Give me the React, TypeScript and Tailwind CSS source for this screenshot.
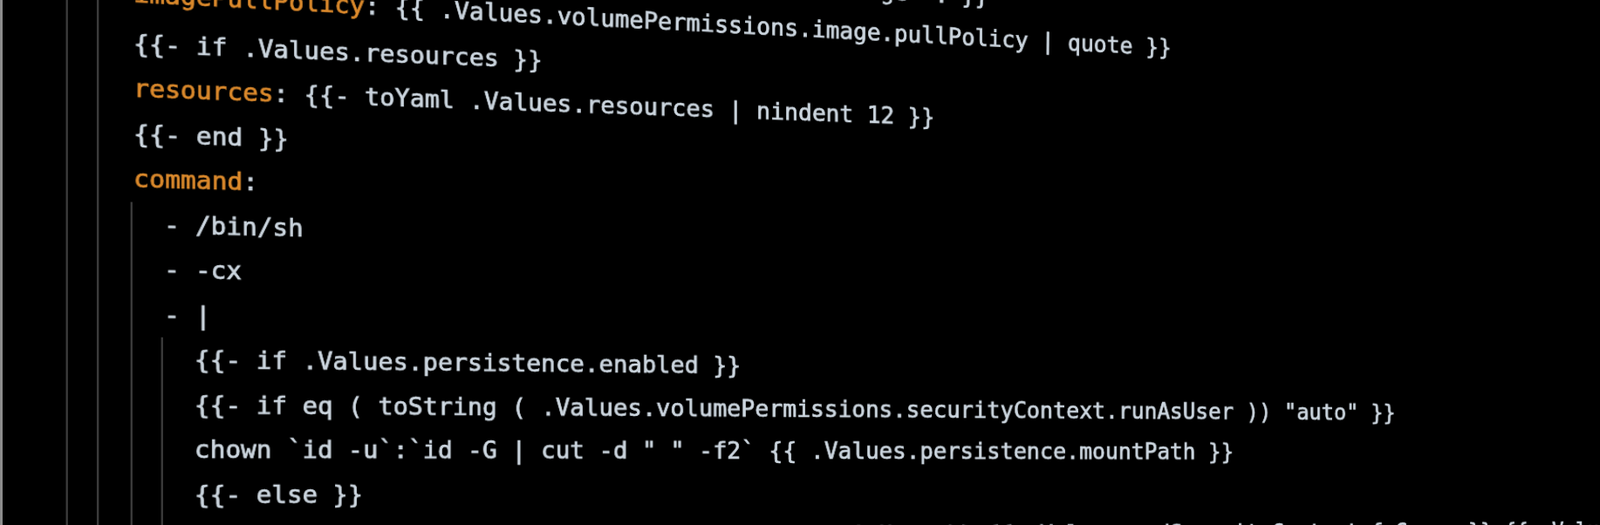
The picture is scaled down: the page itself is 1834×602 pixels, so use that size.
import React from "react";

const K = ({ children }: { children: React.ReactNode }) => (
  <span className="text-[#dc8a2c]">{children}</span>
);

const Line = ({ children }: { children?: React.ReactNode }) => (
  <div className="whitespace-pre h-[48.5px]">{children}</div>
);

const TiltLine = ({ children }: { children?: React.ReactNode }) => (
  <div className="whitespace-pre h-[48.5px] origin-left rotate-[0.45deg] -translate-y-[5px]">{children}</div>
);

export default function App() {
  return (
    <div className="w-[1834px] h-[602px] overflow-hidden bg-black border-l-[3px] border-[#8c8c8c]">
      <div className="-mt-[100px] h-[820px] w-[1831px] origin-[914px_640px] [transform:perspective(1200px)_rotateY(6deg)] [font-family:'DejaVu_Sans_Mono',monospace] text-[26.5px] leading-[48.5px] text-[#ccd6df] [-webkit-text-stroke:0.7px_currentColor] blur-[0.4px]">
        <div className="ml-[126px] h-full border-l-2 border-[#3d3d3d] pl-[29px]">
          <div className="h-full border-l-2 border-[#3d3d3d] pt-[59.5px] pl-[35px]">
            <TiltLine>
              <K>image</K>: {"{{ include \"postgresql.volumePermissions.image\" . }}"}
            </TiltLine>
            <TiltLine>
              <K>imagePullPolicy</K>: {"{{ .Values.volumePermissions.image.pullPolicy | quote }}"}
            </TiltLine>
            <Line>{"{{- if .Values.resources }}"}</Line>
            <Line>
              <K>resources</K>: {"{{- toYaml .Values.resources | nindent 12 }}"}
            </Line>
            <Line>{"{{- end }}"}</Line>
            <Line>
              <K>command</K>:
            </Line>
            <div className="-ml-[3px] border-l-2 border-[#3d3d3d] pl-[32px]">
              <Line>- /bin/sh</Line>
              <Line>- -cx</Line>
              <Line>- |</Line>
              <div className="-ml-[3px] border-l-2 border-[#3d3d3d] pl-[32px]">
                <Line>{"{{- if .Values.persistence.enabled }}"}</Line>
                <Line>
                  {"{{- if eq ( toString ( .Values.volumePermissions.securityContext.runAsUser )) \"auto\" }}"}
                </Line>
                <Line>
                  {"chown `id -u`:`id -G | cut -d \" \" -f2` {{ .Values.persistence.mountPath }}"}
                </Line>
                <Line>{"{{- else }}"}</Line>
                <Line>
                  {"chown {{ .Values.containerSecurityContext.runAsUser }}:{{ .Values.podSecurityContext.fsGroup }} {{ .Values.persistence.mountPath }}"}
                </Line>
                <Line>{"{{- end }}"}</Line>
                <Line>{"{{- end }}"}</Line>
                <Line>{""}</Line>
              </div>
            </div>
          </div>
        </div>
      </div>
    </div>
  );
}
